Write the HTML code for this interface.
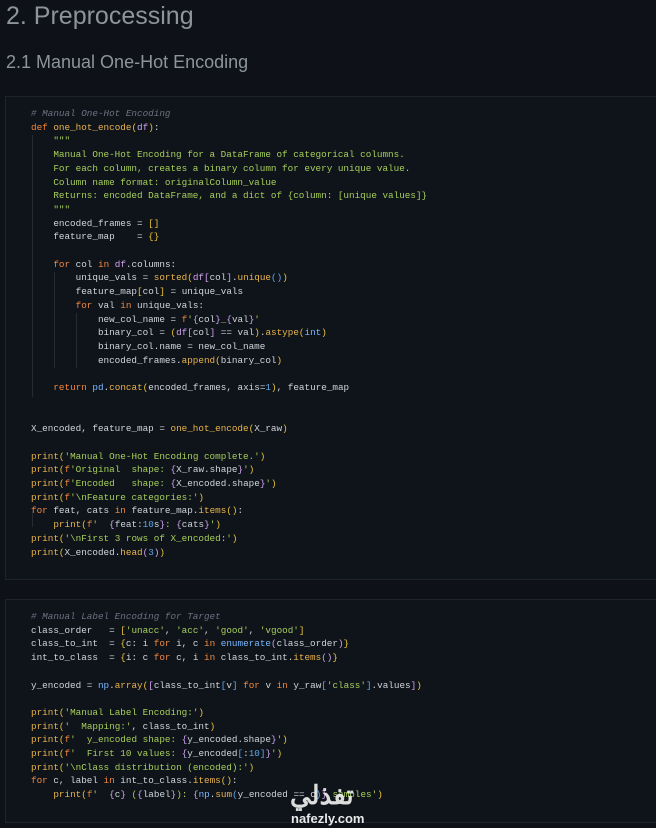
<!DOCTYPE html>
<html><head><meta charset="utf-8"><style>
html,body{margin:0;padding:0;background:#0e1117;width:656px;height:828px;overflow:hidden}
h1{position:absolute;left:6px;top:0;margin:0;font:300 25px/32px "Liberation Sans",sans-serif;color:#8d949c}
h2{position:absolute;left:6px;top:50px;margin:0;font:300 18px/24px "Liberation Sans",sans-serif;color:#8d949c}
.box{position:absolute;left:5px;right:-2px;background:#0f131a;border:1px solid #1f242c}
pre{margin:0;position:absolute;left:25px;font:9.3px/13.7px "Liberation Mono",monospace;color:#d0d6dd;white-space:pre}
.c{color:#6b7280;font-style:italic}.k{color:#f0883e}.f{color:#e9b44c}.s{color:#a6cf5a}.p{color:#d0a3ee}.b{color:#5fa8e8}.y{color:#e8c33a}.n{color:#79b8ff}
.g{position:absolute;width:1px;background:#262b33}
</style></head><body>
<h1>2. Preprocessing</h1>
<h2>2.1 Manual One-Hot Encoding</h2>
<div class="box" style="top:96px;height:482px">
<div class="g" style="left:26px;top:38px;height:262px"></div>
<div class="g" style="left:48px;top:175px;height:96px"></div>
<div class="g" style="left:70px;top:216px;height:55px"></div>
<div class="g" style="left:26px;top:416px;height:14px"></div>
<pre style="top:10px"><span class="c"># Manual One-Hot Encoding</span>
<span class="k">def</span> <span class="f">one_hot_encode</span><span class="y">(</span><span class="p">df</span><span class="y">)</span>:
    <span class="s">"""</span>
<span class="s">    Manual One-Hot Encoding for a DataFrame of categorical columns.</span>
<span class="s">    For each column, creates a binary column for every unique value.</span>
<span class="s">    Column name format: originalColumn_value</span>
<span class="s">    Returns: encoded DataFrame, and a dict of {column: [unique values]}</span>
<span class="s">    """</span>
    encoded_frames = <span class="y">[]</span>
    feature_map    = <span class="y">{}</span>

    <span class="k">for</span> col <span class="k">in</span> <span class="p">df</span>.columns:
        unique_vals = <span class="f">sorted</span><span class="y">(</span><span class="p">df</span><span class="p">[</span>col<span class="p">]</span>.<span class="f">unique</span><span class="b">()</span><span class="y">)</span>
        feature_map<span class="y">[</span>col<span class="y">]</span> = unique_vals
        <span class="k">for</span> val <span class="k">in</span> unique_vals:
            new_col_name = <span class="k">f</span><span class="s">'</span><span class="p">{</span>col<span class="p">}</span><span class="s">_</span><span class="p">{</span>val<span class="p">}</span><span class="s">'</span>
            binary_col = <span class="y">(</span><span class="p">df</span><span class="p">[</span>col<span class="p">]</span> == val<span class="y">)</span>.<span class="f">astype</span><span class="y">(</span><span class="n">int</span><span class="y">)</span>
            binary_col.name = new_col_name
            encoded_frames.<span class="f">append</span><span class="y">(</span>binary_col<span class="y">)</span>

    <span class="k">return</span> <span class="n">pd</span>.<span class="f">concat</span><span class="y">(</span>encoded_frames, axis=<span class="b">1</span><span class="y">)</span>, feature_map


X_encoded, feature_map = <span class="f">one_hot_encode</span><span class="y">(</span>X_raw<span class="y">)</span>

<span class="f">print</span><span class="y">(</span><span class="s">'Manual One-Hot Encoding complete.'</span><span class="y">)</span>
<span class="f">print</span><span class="y">(</span><span class="k">f</span><span class="s">'Original  shape: </span><span class="p">{</span>X_raw.shape<span class="p">}</span><span class="s">'</span><span class="y">)</span>
<span class="f">print</span><span class="y">(</span><span class="k">f</span><span class="s">'Encoded   shape: </span><span class="p">{</span>X_encoded.shape<span class="p">}</span><span class="s">'</span><span class="y">)</span>
<span class="f">print</span><span class="y">(</span><span class="k">f</span><span class="s">'\nFeature categories:'</span><span class="y">)</span>
<span class="k">for</span> feat, cats <span class="k">in</span> feature_map.<span class="f">items</span><span class="y">()</span>:
    <span class="f">print</span><span class="y">(</span><span class="k">f</span><span class="s">'  </span><span class="p">{</span>feat:<span class="b">10</span>s<span class="p">}</span><span class="s">: </span><span class="p">{</span>cats<span class="p">}</span><span class="s">'</span><span class="y">)</span>
<span class="f">print</span><span class="y">(</span><span class="s">'\nFirst 3 rows of X_encoded:'</span><span class="y">)</span>
<span class="f">print</span><span class="y">(</span>X_encoded.<span class="f">head</span><span class="p">(</span><span class="b">3</span><span class="p">)</span><span class="y">)</span></pre>
</div>
<div class="box" style="top:599px;height:222px">
<pre style="top:10px"><span class="c"># Manual Label Encoding for Target</span>
class_order   = <span class="y">[</span><span class="s">'unacc'</span>, <span class="s">'acc'</span>, <span class="s">'good'</span>, <span class="s">'vgood'</span><span class="y">]</span>
class_to_int  = <span class="y">{</span>c: i <span class="k">for</span> i, c <span class="k">in</span> <span class="n">enumerate</span><span class="p">(</span>class_order<span class="p">)</span><span class="y">}</span>
int_to_class  = <span class="y">{</span>i: c <span class="k">for</span> c, i <span class="k">in</span> class_to_int.<span class="f">items</span><span class="p">()</span><span class="y">}</span>

y_encoded = <span class="n">np</span>.<span class="f">array</span><span class="y">(</span><span class="p">[</span>class_to_int<span class="b">[</span>v<span class="b">]</span> <span class="k">for</span> v <span class="k">in</span> y_raw<span class="b">[</span><span class="s">'class'</span><span class="b">]</span>.values<span class="p">]</span><span class="y">)</span>

<span class="f">print</span><span class="y">(</span><span class="s">'Manual Label Encoding:'</span><span class="y">)</span>
<span class="f">print</span><span class="y">(</span><span class="s">'  Mapping:'</span>, class_to_int<span class="y">)</span>
<span class="f">print</span><span class="y">(</span><span class="k">f</span><span class="s">'  y_encoded shape: </span><span class="p">{</span>y_encoded.shape<span class="p">}</span><span class="s">'</span><span class="y">)</span>
<span class="f">print</span><span class="y">(</span><span class="k">f</span><span class="s">'  First 10 values: </span><span class="p">{</span>y_encoded<span class="b">[</span>:<span class="b">10</span><span class="b">]</span><span class="p">}</span><span class="s">'</span><span class="y">)</span>
<span class="f">print</span><span class="y">(</span><span class="s">'\nClass distribution (encoded):'</span><span class="y">)</span>
<span class="k">for</span> c, label <span class="k">in</span> int_to_class.<span class="f">items</span><span class="y">()</span>:
    <span class="f">print</span><span class="y">(</span><span class="k">f</span><span class="s">'  </span><span class="p">{</span>c<span class="p">}</span><span class="s"> (</span><span class="p">{</span>label<span class="p">}</span><span class="s">): </span><span class="p">{</span><span class="n">np</span>.<span class="f">sum</span><span class="b">(</span>y_encoded == c<span class="b">)</span><span class="p">}</span><span class="s"> samples'</span><span class="y">)</span></pre>
</div>
<div style="position:absolute;left:290px;top:780px;font:bold 26px/28px 'Noto Sans CJK SC',sans-serif;color:#f2f2f2;opacity:.9">تفذلي</div>
<div style="position:absolute;left:291px;top:811px;font:bold 13px/15px 'Liberation Sans',sans-serif;color:#e8e8e8">nafezly.com</div>
</body></html>
